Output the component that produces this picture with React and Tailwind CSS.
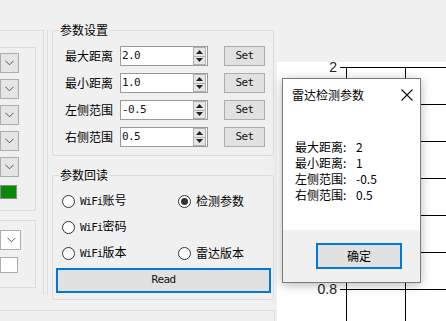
import React from "react";

const cjk = "font-['Noto_Sans_CJK_SC',sans-serif]";
const mono = "font-['DejaVu_Sans_Mono',monospace]";

function Chevron() {
  return (
    <svg width="9" height="6" viewBox="0 0 9 6" className="block">
      <path d="M0.5 0.8 L4.5 4.8 L8.5 0.8" fill="none" stroke="#555" strokeWidth="1" />
    </svg>
  );
}

function Spin() {
  return (
    <div className="w-[13px] h-[18px] flex flex-col border border-[#b0b0b0] bg-[#e6e6e6] mr-[1px]">
      <div className="flex-1 flex items-center justify-center border-b border-[#b0b0b0]">
        <svg width="7" height="4" viewBox="0 0 7 4"><path d="M0 4 L3.5 0 L7 4 Z" fill="#222" /></svg>
      </div>
      <div className="flex-1 flex items-center justify-center">
        <svg width="7" height="4" viewBox="0 0 7 4"><path d="M0 0 L3.5 4 L7 0 Z" fill="#222" /></svg>
      </div>
    </div>
  );
}

function ParamRow({ label, value }) {
  return (
    <div className="flex items-center h-[20px]">
      <div className={`ml-[12px] w-[55px] text-[12px] leading-[14px] text-black ${cjk}`}>{label}</div>
      <div className="w-[88px] h-[20px] border border-[#9a9a9a] bg-white flex items-center justify-between">
        <span className={`pl-[1px] text-[11px] tracking-[-0.6px] text-[#111] ${mono}`}>{value}</span>
        <Spin />
      </div>
      <div className={`ml-[16px] w-[41px] h-[20px] border border-[#adadad] bg-[#e1e1e1] flex items-center justify-center text-[11px] tracking-[-0.6px] text-[#111] ${mono}`}>
        Set
      </div>
    </div>
  );
}

function Radio({ checked, children }) {
  return (
    <div className="flex items-center">
      <div className="w-[13px] h-[13px] rounded-full border border-[#333] bg-white flex items-center justify-center">
        {checked && <div className="w-[7px] h-[7px] rounded-full bg-[#333]" />}
      </div>
      <div className={`ml-[5px] text-[12px] leading-[14px] text-black ${cjk}`}>{children}</div>
    </div>
  );
}

function Wifi({ children }) {
  return (
    <>
      <span className={`text-[11px] tracking-[-1px] text-[#111] ${mono}`}>WiFi</span>
      {children}
    </>
  );
}

function LeftCombo({ w, white }) {
  return (
    <div
      className={`h-[20px] border border-[#adadad] flex items-center justify-end pr-[4px] ${white ? "bg-white" : "bg-[#e5e5e5]"}`}
      style={{ width: w }}
    >
      <Chevron />
    </div>
  );
}

function Chart() {
  const ys = [67, 104, 141, 178, 215, 252, 289];
  return (
    <svg width="172" height="321" viewBox="0 0 172 321" className="block">
      <rect x="2" y="62" width="170" height="259" fill="#ffffff" />
      {ys.map((y) => (
        <line key={y} x1="65" y1={y + 0.5} x2="172" y2={y + 0.5} stroke="#000" strokeWidth="1" />
      ))}
      <text x="62" y="72" textAnchor="end" fontSize="14" fill="#222" fontFamily="Liberation Sans, sans-serif">2</text>
      <text x="62" y="294" textAnchor="end" fontSize="14" fill="#222" fontFamily="Liberation Sans, sans-serif">0.8</text>
      <line x1="71.5" y1="67" x2="71.5" y2="321" stroke="#000" strokeWidth="1" />
      <line x1="130.5" y1="67" x2="130.5" y2="321" stroke="#000" strokeWidth="1" />
    </svg>
  );
}

export default function App() {
  return (
    <div className="w-[446px] h-[321px] bg-[#f0f0f0] relative overflow-hidden flex">
      {/* main window left + middle */}
      <div className="w-[275px] shrink-0 flex flex-col">
        <div className="flex h-[310px]">
          {/* left partial column */}
          <div className="w-[52px] shrink-0">
            <div className="mt-[30px] w-[48px] h-[265px] border-r border-[#dcdcdc]">
              <div className="w-[44px] h-full border-t border-r border-[#dcdcdc]">
                <div className="mt-[16px] w-[36px] h-[164px] border-t border-r border-b border-[#dcdcdc] flex flex-col gap-[6px] pt-[5px]">
                  <LeftCombo w={19} />
                  <LeftCombo w={19} />
                  <LeftCombo w={19} />
                  <LeftCombo w={19} />
                  <LeftCombo w={19} />
                  <div className="mt-[2px] w-[17px] h-[14px] border border-[#8c8c8c] bg-[#078a07]" />
                </div>
                <div className="mt-[9px] w-[36px] h-[68px] border-t border-r border-b border-[#dcdcdc] flex flex-col pt-[9px]">
                  <LeftCombo w={21} white />
                  <div className="mt-[7px] w-[18px] h-[16px] border border-[#adadad] bg-white" />
                </div>
              </div>
            </div>
          </div>

          {/* middle column */}
          <div className="w-[222px] shrink-0 flex flex-col">
            <div className="mt-[30px] h-[126px] border border-[#dcdcdc] rounded-[2px] relative">
              <div className={`absolute left-[6px] top-[-9px] px-[1px] bg-[#f0f0f0] text-[12px] leading-[16px] text-black ${cjk}`}>
                参数设置
              </div>
              <div className="pt-[15px] flex flex-col gap-[7px]">
                <ParamRow label="最大距离" value="2.0" />
                <ParamRow label="最小距离" value="1.0" />
                <ParamRow label="左侧范围" value="-0.5" />
                <ParamRow label="右侧范围" value="0.5" />
              </div>
            </div>

            <div className="mt-[19px] h-[125px] border border-[#dcdcdc] rounded-[2px] relative">
              <div className={`absolute left-[6px] top-[-9px] px-[1px] bg-[#f0f0f0] text-[12px] leading-[16px] text-black ${cjk}`}>
                参数回读
              </div>
              <div className="pt-[12px] pl-[9px] flex flex-col">
                <div className="h-[26px] flex items-center">
                  <div className="w-[116px]"><Radio><Wifi>账号</Wifi></Radio></div>
                  <Radio checked>检测参数</Radio>
                </div>
                <div className="h-[26px] flex items-center">
                  <Radio><Wifi>密码</Wifi></Radio>
                </div>
                <div className="h-[26px] flex items-center">
                  <div className="w-[116px]"><Radio><Wifi>版本</Wifi></Radio></div>
                  <Radio>雷达版本</Radio>
                </div>
              </div>
              <div className={`mt-[2px] ml-[3px] w-[215px] h-[25px] border-2 border-[#0078d7] bg-[#e1e1e1] flex items-center justify-center text-[11px] tracking-[-0.6px] text-[#111] ${mono}`}>
                Read
              </div>
            </div>
          </div>
        </div>
        <div className="h-[11px] border-t border-r border-[#dcdcdc]" />
      </div>

      {/* chart area */}
      <div className="flex-1">
        <Chart />
      </div>

      {/* dialog overlay */}
      <div className="absolute left-[282px] top-[78px] w-[139px] h-[205px] border border-[#7a7a7a] bg-white flex flex-col shadow-[0_2px_10px_rgba(0,0,0,0.28)]">
        <div className="flex-1 bg-white flex flex-col">
          <div className="pt-[8px] pl-[9px] pr-[7px] flex items-center justify-between">
            <div className={`text-[12px] leading-[16px] text-black ${cjk}`}>雷达检测参数</div>
            <svg width="12" height="12" viewBox="0 0 12 12" className="block">
              <path d="M0.5 0.5 L11.5 11.5 M11.5 0.5 L0.5 11.5" stroke="#111" strokeWidth="1.1" fill="none" />
            </svg>
          </div>
          <div className={`mt-[36px] pl-[12px] text-[12px] leading-[16px] text-black ${cjk}`}>
            <div className="flex"><span className="w-[61px]">最大距离:</span><span>2</span></div>
            <div className="flex"><span className="w-[61px]">最小距离:</span><span>1</span></div>
            <div className="flex"><span className="w-[61px]">左侧范围:</span><span>-0.5</span></div>
            <div className="flex"><span className="w-[61px]">右侧范围:</span><span>0.5</span></div>
          </div>
        </div>
        <div className="h-[52px] bg-[#f0f0f0] pt-[13px] pl-[33px]">
          <div className={`w-[86px] h-[26px] border-2 border-[#0078d7] bg-[#e1e1e1] flex items-center justify-center text-[12px] text-black ${cjk}`}>
            确定
          </div>
        </div>
      </div>
    </div>
  );
}
